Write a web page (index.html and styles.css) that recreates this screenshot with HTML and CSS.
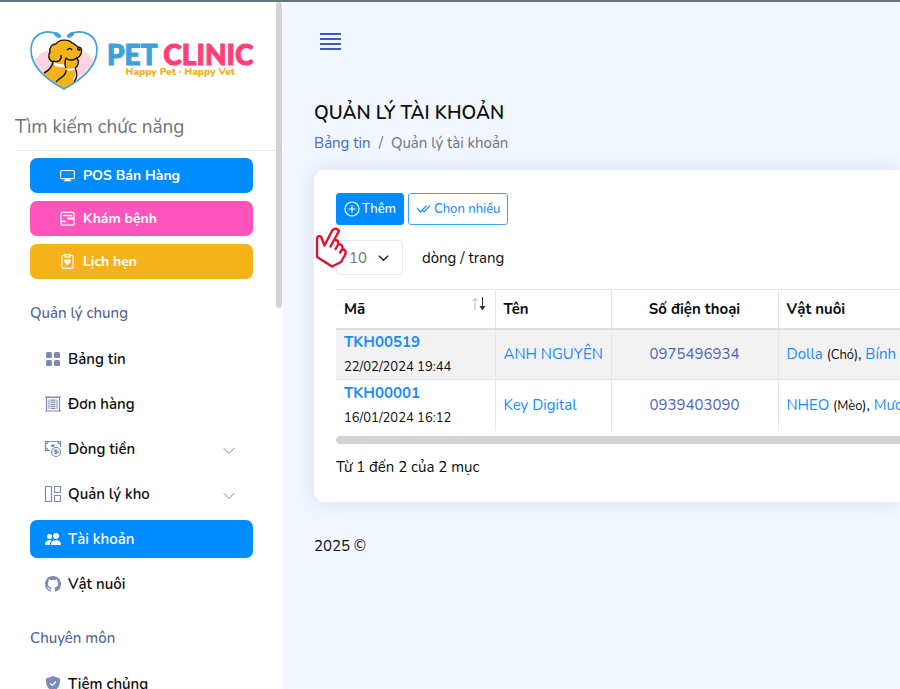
FILE: index.html
```html
<!DOCTYPE html>
<html lang="vi">
<head>
<meta charset="utf-8">
<title>Quản lý tài khoản</title>
<link rel="stylesheet" href="styles.css">
</head>
<body>
<div class="layout">
  <aside class="sidebar">
    <a class="brand" href="#">
      <svg class="brand-mark" viewBox="0 0 68 60" aria-hidden="true">
        <path d="M4 31C10 19 23 17 34 19C47 16 59 20 64 31C59 43 46 51 34 58C22 51 9 43 4 31Z" fill="#fdd5e1"/>
        <path d="M14 42C19 38 22 35 23 30C17 29 18 23 20 21C19 16 22 13 26 13C29 8 39 8 42 12C46 12 45 16 51 17C53 21 50 27 47 28C49 31 48 36 45 39C50 44 48 48 45 51L34 58L15 45Z" fill="#f5b31b"/>
        <path d="M24 31Q29 34 35 33V36Q28 37 24 34ZM37 38L46 37L45 39L38 40ZM43 50Q44 43 48 42Q49 47 45 52Z" fill="#fff"/>
        <path d="M14 42C20 39 22 35 23 31C18 29 18 24 20 21C19 16 22 13 26 13C29 8 39 8 42 12C45 12 45 16 51 17C53 21 50 26 47 27C50 31 48 35 45 37M23 30C28 32 32 29 31 24M36 37C34 33 35 30 36 27L39 29H43L47 27M36 39C36 46 30 46 26 51M37 19Q40 16 42 19M45 37C48 42 47 47 44 51" fill="none" stroke="#171513" stroke-width="1.4" stroke-linejoin="round"/>
        <path d="M47 17L51 18L50 20L47 19Z" fill="#171513"/>
        <path d="M28 4C19-2 6 1 2 12C-3 32 13 47 34 58C55 47 71 32 66 12C62 1 48-2 39 4" fill="none" stroke="#3fa0db" stroke-width="1.600"/>
        <path d="M26 3L29 5M42 3L39 5" stroke="#3fa0db" stroke-width="4" stroke-linecap="round"/>
      </svg>
      <span class="brand-text">
        <span class="brand-name">PET <b>CLINIC</b></span>
        <span class="brand-tag">Happy Pet · Happy Vet</span>
      </span>
    </a>
    <input class="search" type="search" placeholder="Tìm kiếm chức năng" aria-label="Tìm kiếm chức năng">
    <div class="quick">
      <a class="quick-link blue" href="#"><svg viewBox="0 0 16 16" class="icon"><path d="M2 2.700h12q1.300 0 1.300 1.300v6q0 1.300-1.300 1.300H2Q.700 11.300.700 10V4Q.700 2.700 2 2.700Z" class="line"/><path d="M6 11h4l.500 2H12v1H4v-1h1.500z"/></svg>POS Bán Hàng</a>
      <a class="quick-link pink" href="#"><svg viewBox="0 0 16 16" class="icon"><path d="M4 0v2M12 0v2M2.500 1.500h11q1.500 0 1.500 1.500v10.500q0 1.500-1.500 1.500h-11Q1 15 1 13.500V3q0-1.500 1.500-1.500Z" class="line"/><path d="M3 4h10v1.500H3zM8 7h7v2H8zM1 10h5v2H1z"/></svg>Khám bệnh</a>
      <a class="quick-link amber" href="#"><svg viewBox="0 0 16 16" class="icon"><path d="M5 1.500H3.500Q2 1.500 2 3v11q0 1.300 1.500 1.300h9Q14 15.300 14 14V3q0-1.500-1.500-1.500H11M5.500.700h5v2.600h-5z" class="line"/><path d="M8 12C1 7 6 4 8 6.500C10 4 15 7 8 12Z"/></svg>Lịch hẹn</a>
    </div>
    <h2 class="group">Quản lý chung</h2>
    <nav class="menu" aria-label="Quản lý chung">
      <a class="item" href="#"><svg viewBox="0 0 16 16" class="icon"><rect x="1" y="1" width="6" height="6" rx="1.500"/><rect x="9" y="1" width="6" height="6" rx="1.500"/><rect x="1" y="9" width="6" height="6" rx="1.500"/><rect x="9" y="9" width="6" height="6" rx="1.500"/></svg><span>Bảng tin</span></a>
      <a class="item" href="#"><svg viewBox="0 0 16 16" class="icon"><path d="M1.500 15V1.500h13V15M0 1h16M0 15h16" class="line"/><path d="M3.500 3.500h1V13h-1zM5.500 3.500h5v1.200h-5zM5.500 5.600h5v1.200h-5zM5.500 7.700h5v1.200h-5zM5.500 9.800h5V11h-5zM5.500 11.800h5V13h-5zM11.500 3.500h1V13h-1z"/></svg><span>Đơn hàng</span></a>
      <a class="item" href="#"><svg viewBox="0 0 16 16" class="icon"><path d="M5 9.500H.500v-9h15V6M.500 3Q3 3 3 .500M13 .500Q13 3 15.500 3M.500 7Q3 7 3 9.500" class="line"/><circle cx="11" cy="11" r="4.500" class="line"/><path d="M8 3.200a2 2 0 0 1 2 2L6.300 6.300A2 2 0 0 1 8 3.200Z"/><path d="M12.500 9.500q-3-1.300-3 .300t3 1.200-3 1.700M11 8.300v5.500" class="line"/></svg><span>Dòng tiền</span><svg viewBox="0 0 12 8" class="caret"><path d="M.700 1 6 6.500 11.300 1"/></svg></a>
      <a class="item" href="#"><svg viewBox="0 0 16 16" class="icon"><path d="M.500.500h6v15h-6zM9.500.500h6v6h-6zM9.500 9.500h6v6h-6z" class="line"/></svg><span>Quản lý kho</span><svg viewBox="0 0 12 8" class="caret"><path d="M.700 1 6 6.500 11.300 1"/></svg></a>
      <a class="item active" href="#"><svg viewBox="0 0 16 16" class="icon"><path d="M7 14s-1 0-1-1 1-4 5-4 5 3 5 4-1 1-1 1zM11 8a3 3 0 1 0 0-6 3 3 0 0 0 0 6M5.200 14A2.200 2.200 0 0 1 5 13c0-1.400.700-2.700 1.900-3.700A6 6 0 0 0 5 9c-4 0-5 3-5 4s1 1 1 1zM4.500 8a2.500 2.500 0 1 0 0-5 2.500 2.500 0 0 0 0 5"/></svg><span>Tài khoản</span></a>
      <a class="item" href="#"><svg viewBox="0 0 16 16" class="icon"><path d="M8 0C3.580 0 0 3.580 0 8c0 3.540 2.290 6.530 5.470 7.590.4.070.55-.17.55-.38 0-.19-.01-.82-.01-1.490-2.010.37-2.530-.49-2.690-.94-.09-.23-.48-.94-.82-1.130-.28-.15-.68-.52-.01-.53.63-.01 1.080.58 1.230.82.72 1.210 1.870.87 2.330.66.07-.52.28-.87.51-1.070-1.780-.2-3.640-.89-3.640-3.950 0-.87.31-1.590.82-2.150-.08-.2-.36-1.020.08-2.120 0 0 .67-.21 2.200.82a7.600 7.600 0 0 1 4 0c1.530-1.040 2.200-.82 2.200-.82.44 1.100.16 1.920.08 2.120.51.56.82 1.270.82 2.150 0 3.070-1.870 3.750-3.650 3.950.29.25.54.73.54 1.480 0 1.070-.01 1.930-.01 2.200 0 .21.15.46.55.38A8 8 0 0 0 16 8c0-4.420-3.580-8-8-8"/></svg><span>Vật nuôi</span></a>
    </nav>
    <h2 class="group">Chuyên môn</h2>
    <nav class="menu" aria-label="Chuyên môn">
      <a class="item" href="#"><svg viewBox="0 0 16 16" class="icon"><path d="M8 0Q11 1.500 14 2q1 0 1 1c.500 6-2 10-7 13C3 13 .500 9 1 3q0-1 1-1Q5 1.500 8 0Z"/><path d="M5 7.300 7.200 9.500 11 5.500" fill="none" stroke="#fff" stroke-width="1.200"/></svg><span>Tiêm chủng</span></a>
    </nav>
    <div class="side-thumb"></div>
  </aside>
  <main class="main">
    <button class="burger" type="button" aria-label="Menu"><svg viewBox="0 0 21 20"><path d="M0 3h21M0 8h21M0 13h21M0 18h21"/></svg></button>
    <h1 class="title">QUẢN LÝ TÀI KHOẢN</h1>
    <nav class="crumbs" aria-label="Breadcrumb"><a href="#">Bảng tin</a><span>/</span><span>Quản lý tài khoản</span></nav>
    <section class="card">
      <div class="actions">
        <button class="btn solid" type="button"><svg viewBox="0 0 16 16" class="icon"><circle cx="8" cy="8" r="7" class="line"/><path d="M8 4.500v7M4.500 8h7" class="line"/></svg>Thêm</button>
        <button class="btn outline" type="button"><svg viewBox="0 0 16 16" class="icon"><path d="M1 7 4.500 11 10.500 4.500M6.500 9.500 8 11 14 4.500" class="line"/></svg>Chọn nhiều</button>
      </div>
      <div class="length">
        <div class="select-box">
          <select id="rows"><option>10</option><option>25</option></select>
          <svg viewBox="0 0 12 8" class="select-caret"><path d="M1 1.500 6 6.500 11 1.500"/></svg>
          <svg class="pointer" viewBox="0 0 32 41" aria-hidden="true"><path d="M2 30V12Q2.500 8 6 9.500L9.500 18.500L17.500 3Q21 0 24 4L19 13Q23 12 23.500 17Q28 17 27.500 22Q32 23 30 28L26 35L17 39.500L2 30ZM19 13L15.500 19.500M23.500 17L20.500 22M27.500 22L25 25.500"/></svg>
        </div>
        <label for="rows">dòng / trang</label>
      </div>
      <div class="table-wrap">
        <table>
          <colgroup><col class="c-code"><col class="c-name"><col class="c-phone"><col class="c-pets"></colgroup>
          <thead><tr>
            <th><div class="sort">Mã<svg viewBox="0 0 16 14"><path d="M4 13V1.500M1.500 4 4 1.500 6.500 4" stroke="#b5b5b5"/><path d="M11.500 0v12" stroke="#333"/><path d="M8.500 9h6l-3 4.500z" fill="#333"/></svg></div></th>
            <th>Tên</th><th class="center">Số điện thoại</th><th>Vật nuôi</th>
          </tr></thead>
          <tbody>
            <tr><td><a class="code" href="#">TKH00519</a><small>22/02/2024 19:44</small></td><td><a href="#">ANH NGUYÊN</a></td><td class="center"><a class="phone" href="#">0975496934</a></td><td><a href="#">Dolla</a> <small>(Chó)</small>, <a href="#">Bính</a></td></tr>
            <tr><td><a class="code" href="#">TKH00001</a><small>16/01/2024 16:12</small></td><td><a href="#">Key Digital</a></td><td class="center"><a class="phone" href="#">0939403090</a></td><td><a href="#">NHEO</a> <small>(Mèo)</small>, <a href="#">Mươ</a></td></tr>
          </tbody>
        </table>
      </div>
      <div class="table-thumb"></div>
      <p class="info">Từ 1 đến 2 của 2 mục</p>
    </section>
    <footer class="footer">2025 ©</footer>
  </main>
</div>
</body>
</html>
```
FILE: styles.css
```css
* { box-sizing: border-box; }
body {
  margin: 0;
  height: 100vh;
  overflow: hidden;
  border-top: 2px solid #65737c;
  background: #f1f6ff;
  color: #0c0c0c;
  font: 15px/24px Nunito, Roboto, "Noto Sans", sans-serif;
}
a { color: #188cfb; text-decoration: none; }
h1, h2, p { margin: 0; }
.layout { display: flex; height: 100%; }
.icon { width: 16px; height: 16px; flex: none; fill: currentColor; overflow: visible; }
.line { fill: none; stroke: currentColor; stroke-width: 1.2; }

.sidebar { position: relative; flex: 0 0 283px; overflow: hidden; background: #fff; }
.brand { display: flex; gap: 9px; margin: 29px 0 20px 30px; height: 60px; }
.brand-mark { flex: none; width: 68px; height: 60px; }
.brand-text { display: flex; flex-direction: column; align-items: center; padding-top: 6px; white-space: nowrap; }
.brand-name { font: 900 28px/34px Lato, sans-serif; color: #3fa0db; -webkit-text-stroke: 1px currentColor; }
.brand-name b { font-weight: 900; color: #ff3f78; }
.brand-tag { margin-top: -6px; font: 900 10px/14px Nunito, Lato, sans-serif; color: #f5b31b; }
.search {
  display: block; width: 100%; height: 40px; margin-left: 15px; padding: 0 0 8px;
  border: 0; border-bottom: 1px solid #e6e8ea; background: none;
  font: inherit; font-size: 19px; color: #6c757d;
}
.search::placeholder { color: #6c757d; opacity: 1; }
.quick { display: flex; flex-direction: column; gap: 8px; margin: 7px 30px 22px; }
.quick-link {
  display: flex; align-items: center; gap: 8px; height: 35px; padding-left: 30px;
  border-radius: 7px; color: #fff; font-size: 14px; font-weight: 700;
}
.quick-link .icon { width: 15px; height: 15px; }
.blue { background: #008cff; }
.pink { background: #ff54bb; }
.amber { background: #f6b319; }
.group { margin: 0 30px 15px; font-size: 15px; line-height: 24px; font-weight: 500; color: #536394; }
.menu { display: flex; flex-direction: column; gap: 7px; margin: 0 30px 23px; }
.item { display: flex; align-items: center; gap: 7px; height: 38px; padding: 0 18px 0 15px; border-radius: 7px; color: #0c0c0c; font-weight: 600; }
.item .icon { color: #7b8ab8; }
.item.active { background: #008cff; color: #fff; }
.item.active .icon { color: #fff; }
.caret { width: 12px; height: 8px; margin: 4px 0 0 auto; fill: none; stroke: #888; }
.side-thumb { position: absolute; top: 0; right: 1px; width: 6px; height: 306px; border-radius: 3px; background: #d3d3d3; }

.main { flex: 1; min-width: 0; padding: 29px 0 0 31px; }
.burger { display: flex; margin: 0 0 48px 6px; padding: 0; border: 0; background: none; }
.burger svg { width: 21px; height: 20px; stroke: #3b5cc4; stroke-width: 2; }
.title { font-size: 19px; line-height: 28px; font-weight: 600; }
.crumbs { display: flex; gap: 8px; margin: 4px 0 15px; color: #6c757d; }
.crumbs a { color: #4768c8; }
.card { padding: 23px 0 23px 22px; border-radius: 10px 0 0 10px; background: #fff; box-shadow: 0 0 22px #d9dff0; }
.actions { display: flex; gap: 4px; }
.btn { display: flex; align-items: center; gap: 2px; height: 32px; padding: 0 7px; border: 1px solid #3da5ff; border-radius: 3px; font: inherit; font-size: 13px; font-weight: 500; white-space: nowrap; }
.solid { background: #008cff; border-color: #008cff; color: #fff; }
.outline { background: #fff; color: #2492fb; }
.length { display: flex; align-items: center; gap: 19px; margin: 15px 0 14px; }
.select-box { position: relative; }
.select-box select { display: block; width: 67px; height: 35px; padding: 0 12px; border: 1px solid #e2eaf3; border-radius: 4px; background: #fff; appearance: none; color: #6c757d; font: inherit; }
.select-caret { position: absolute; right: 14px; top: 14px; width: 11px; height: 8px; fill: none; stroke: #222; stroke-width: 1.5; }
.pointer { position: absolute; left: -21px; top: -13px; width: 32px; height: 41px; fill: #fff; stroke: #e30f2f; stroke-width: 2.4; stroke-linejoin: round; stroke-linecap: round; }
.table-wrap { overflow: hidden; }
table { width: 700px; table-layout: fixed; border-collapse: collapse; }
.c-code { width: 159px; }
.c-name { width: 116px; }
.c-phone { width: 167px; }
th, td { padding: 0 8px; border: 1px solid #e4e6ea; text-align: left; white-space: nowrap; }
th:first-child, td:first-child { border-left: 0; }
th { height: 39px; border-bottom: 2px solid #dcdee1; font-weight: 700; }
td { height: 51px; }
tbody tr:last-child td { border-bottom: 0; }
tbody tr:nth-child(odd) { background: #f2f2f2; }
.center { text-align: center; }
.sort { display: flex; justify-content: space-between; }
.sort svg { width: 16px; height: 14px; fill: none; }
.code { display: block; font-weight: 700; line-height: 24px; }
small { font-size: 13px; line-height: 22px; }
.phone { color: #4e66b8; }
.table-thumb { height: 8px; margin-top: 5px; border-radius: 4px 0 0 4px; background: #d3d3d3; }
.info { margin-top: 11px; }
.footer { margin-top: 32px; }
```
